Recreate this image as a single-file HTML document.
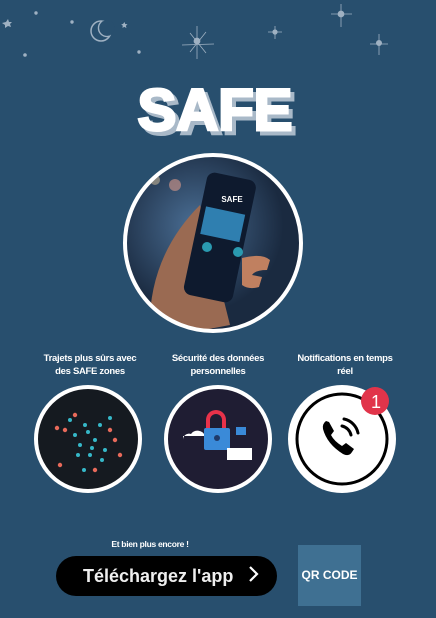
<!DOCTYPE html>
<html><head><meta charset="utf-8"><style>
html,body{margin:0;padding:0}
body{width:436px;height:618px;background:#284f6e;position:relative;overflow:hidden;font-family:"Liberation Sans",sans-serif}
.t{position:absolute;color:#fff;font-size:9.5px;text-align:center;line-height:13px;font-weight:bold;letter-spacing:-0.3px}
</style></head><body>
<svg width="436" height="618" style="position:absolute;left:0;top:0">
<defs>
<radialGradient id="g1" cx="0.4" cy="0.4"><stop offset="0" stop-color="#4a6e94"/><stop offset="1" stop-color="#1a2a40"/></radialGradient>
<clipPath id="c1"><circle cx="213" cy="243" r="88"/></clipPath>
<clipPath id="cm"><circle cx="101" cy="31" r="10"/></clipPath>
</defs>
<g fill="#9fb1c2">
<circle cx="36" cy="13" r="1.7"/><circle cx="72" cy="22" r="1.7"/><circle cx="25" cy="55" r="1.8"/><circle cx="139" cy="52" r="1.7"/>
<path d="M6 22l2-3 1 3 3 0-2 2 1 3-3-1-3 2 0-3-3-2z"/>
<path d="M123 24l1.5-2 .7 2 2.3.3-1.6 1.5.5 2.3-2-1.2-2 1 .4-2.2-1.6-1.5z"/>
</g>
<circle cx="101" cy="31" r="10" fill="none" stroke="#9fb1c2" stroke-width="1.5"/>
<circle cx="107" cy="28" r="8.5" fill="#284f6e" stroke="#9fb1c2" stroke-width="1.5" clip-path="url(#cm)"/>
<circle cx="107" cy="28" r="7.7" fill="#284f6e"/>
<g stroke="#9fb1c2" stroke-width="0.8" fill="#9fb1c2">
<path d="M197 26v33M182 45l32-1M190 33l16 20M206 32l-16 20"/><circle cx="197" cy="41" r="3"/>
<path d="M275 26v13M268 32h14"/><circle cx="275" cy="32" r="2.2"/>
<path d="M341 4v23M331 14h21"/><circle cx="341" cy="14" r="3"/>
<path d="M379 34v21M370 44h18"/><circle cx="379" cy="43" r="2.6"/>
</g>
<text x="219" y="134" text-anchor="middle" font-family="Liberation Sans" font-weight="900" font-size="58" fill="#a9b9c8" stroke="#a9b9c8" stroke-width="3">SAFE</text>
<text x="215" y="130" text-anchor="middle" font-family="Liberation Sans" font-weight="900" font-size="58" fill="#fff" stroke="#fff" stroke-width="3">SAFE</text>
<circle cx="213" cy="243" r="88" fill="url(#g1)"/>
<g clip-path="url(#c1)">
<circle cx="175" cy="185" r="6" fill="#d89a8a" opacity=".6"/><circle cx="155" cy="180" r="5" fill="#e0c8a0" opacity=".5"/>
<path d="M150 340q-5-80 50-135l30 120z" fill="#9a6a52"/>
<rect x="195" y="175" width="50" height="125" rx="8" fill="#0e1a2e" transform="rotate(12 220 237)"/>
<rect x="200" y="210" width="40" height="28" fill="#2f7fb0" transform="rotate(12 220 237)"/>
<circle cx="207" cy="247" r="5" fill="#2a9ab0"/><circle cx="238" cy="252" r="5" fill="#2a9ab0"/>
<text x="232" y="202" fill="#fff" font-size="8" font-weight="bold" text-anchor="middle">SAFE</text>
<path d="M242 258q20-5 28 2l-3 10q-12 0-15 5l10 2-3 10q-10 3-17-2z" fill="#c08060"/>
</g>
<circle cx="213" cy="243" r="88" fill="none" stroke="#fff" stroke-width="4"/>
<circle cx="88" cy="439" r="52" fill="#151a20" stroke="#fff" stroke-width="4"/>
<g fill="#36b8c8"><circle cx="70" cy="420" r="2"/><circle cx="85" cy="425" r="2"/><circle cx="95" cy="440" r="2"/><circle cx="80" cy="445" r="2"/><circle cx="100" cy="425" r="2"/><circle cx="90" cy="455" r="2"/><circle cx="75" cy="435" r="2"/><circle cx="105" cy="450" r="2"/><circle cx="88" cy="432" r="2"/><circle cx="92" cy="448" r="2"/><circle cx="78" cy="455" r="2"/><circle cx="102" cy="460" r="2"/><circle cx="84" cy="470" r="2"/><circle cx="110" cy="418" r="2"/></g>
<g fill="#e86a5a"><circle cx="65" cy="430" r="2.2"/><circle cx="110" cy="430" r="2.2"/><circle cx="60" cy="465" r="2.2"/><circle cx="95" cy="470" r="2.2"/><circle cx="115" cy="440" r="2.2"/><circle cx="75" cy="415" r="2.2"/><circle cx="57" cy="428" r="2.2"/><circle cx="120" cy="455" r="2.2"/></g>
<circle cx="218" cy="439" r="52" fill="#1f1d33" stroke="#fff" stroke-width="4"/>
<path d="M183 440a6 6 0 0 1 8-6 8 8 0 0 1 14 2h-22z" fill="#fff"/>
<path d="M206 420a10 10 0 0 1 20 0v10h-4v-10a6 6 0 0 0-12 0v10h-4z" fill="#e8324a"/>
<rect x="204" y="428" width="26" height="22" rx="2" fill="#3a8ad8"/>
<circle cx="217" cy="438" r="3" fill="#1f3a6a"/>
<rect x="236" y="427" width="10" height="8" fill="#3a8ad8"/>
<path d="M227 448h25v12h-25z" fill="#fff"/>
<circle cx="342" cy="439" r="52" fill="#fff" stroke="#fff" stroke-width="4"/>
<circle cx="342" cy="439" r="45" fill="none" stroke="#000" stroke-width="3"/>
<path d="M326 421q-4 3-3 8 4 15 20 25 6 3 9-2l2-3-8-6-4 3q-8-5-11-11l3-4-5-9z" fill="#000"/>
<path d="M342 426a12 12 0 0 1 9 9M344 419a18 18 0 0 1 14 14" fill="none" stroke="#000" stroke-width="3" stroke-linecap="round"/>
<circle cx="375" cy="401" r="14" fill="#e1344a"/>
<text x="376" y="408" fill="#fff" font-size="18" text-anchor="middle">1</text>
</svg>
<div class="t" style="left:30px;top:352px;width:120px">Trajets plus sûrs avec<br>des SAFE zones</div>
<div class="t" style="left:158px;top:352px;width:120px">Sécurité des données<br>personnelles</div>
<div class="t" style="left:285px;top:352px;width:120px">Notifications en temps<br>réel</div>
<div class="t" style="left:90px;top:538px;width:120px;font-size:8.5px">Et bien plus encore !</div>
<div style="position:absolute;left:56px;top:556px;width:221px;height:40px;border-radius:20px;background:#000;color:#eee;font-weight:bold;font-size:18px;line-height:40px;text-indent:27px">Téléchargez l'app</div>
<svg width="436" height="618" style="position:absolute;left:0;top:0"><path d="M250 567l7 7-7 7" fill="none" stroke="#fff" stroke-width="2.2"/></svg>
<div style="position:absolute;left:298px;top:545px;width:63px;height:61px;background:#3f7092;color:#fff;font-weight:900;font-size:12px;line-height:61px;text-align:center">QR CODE</div>
</body></html>
